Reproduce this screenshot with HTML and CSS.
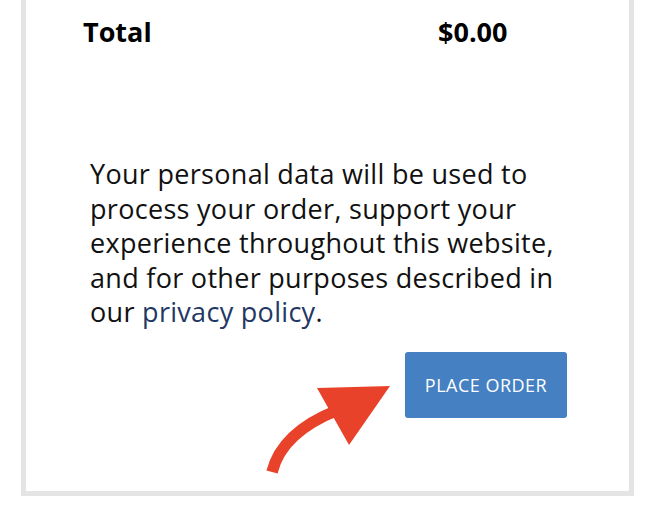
FILE: index.html
```html
<!DOCTYPE html>
<html lang="en">
<head>
<meta charset="utf-8">
<title>Checkout</title>
<link rel="stylesheet" href="styles.css">
</head>
<body>
<div class="panel">
  <div class="total-row">
    <span class="total-label">Total</span>
    <span class="total-value">$0.00</span>
  </div>
  <p class="notice">Your personal data will be used to process your order, support your experience throughout this website, and for other purposes described in our <a class="policy-link" href="#">privacy policy</a>.</p>
  <div class="actions">
    <button class="place-order" type="button">PLACE ORDER</button>
  </div>
  <svg class="pointer-arrow" width="150" height="110" viewBox="0 0 150 110" aria-hidden="true">
    <path d="M17 97 Q27 57 83 35" fill="none" stroke="#e8432a" stroke-width="11.5"/>
    <polygon points="62,13 135,11 94,70" fill="#e8432a"/>
  </svg>
</div>
</body>
</html>
```
FILE: styles.css
```css
html, body {
  margin: 0;
  padding: 0;
  background: #ffffff;
}
body {
  width: 672px;
  height: 527px;
  overflow: hidden;
  font-family: "Open Sans", "Liberation Sans", sans-serif;
  color: #111111;
}
.panel {
  position: relative;
  margin-left: 21px;
  width: 603px;
  border: 5px solid #e4e4e4;
  border-top: 0;
  padding: 13px 0 73px 0;
}
.total-row {
  display: grid;
  grid-template-columns: 355px auto;
  padding-left: 57px;
  font-size: 27px;
  font-weight: 700;
  color: #000000;
}
.notice {
  margin: 107px 62px 0 64px;
  font-size: 27px;
  letter-spacing: 0.3px;
  line-height: 34.5px;
}
.policy-link {
  color: #1f3864;
  text-decoration: none;
}
.actions {
  display: flex;
  justify-content: flex-end;
  margin: 22px 62px 0 64px;
}
.place-order {
  width: 162px;
  height: 66px;
  border: 0;
  border-radius: 3px;
  background: #4480c2;
  color: #ffffff;
  font-family: "Open Sans", "Liberation Sans", sans-serif;
  font-size: 18px;
  letter-spacing: 0.5px;
  padding: 0;
}
.pointer-arrow {
  position: absolute;
  left: 229px;
  top: 375px;
}
```
